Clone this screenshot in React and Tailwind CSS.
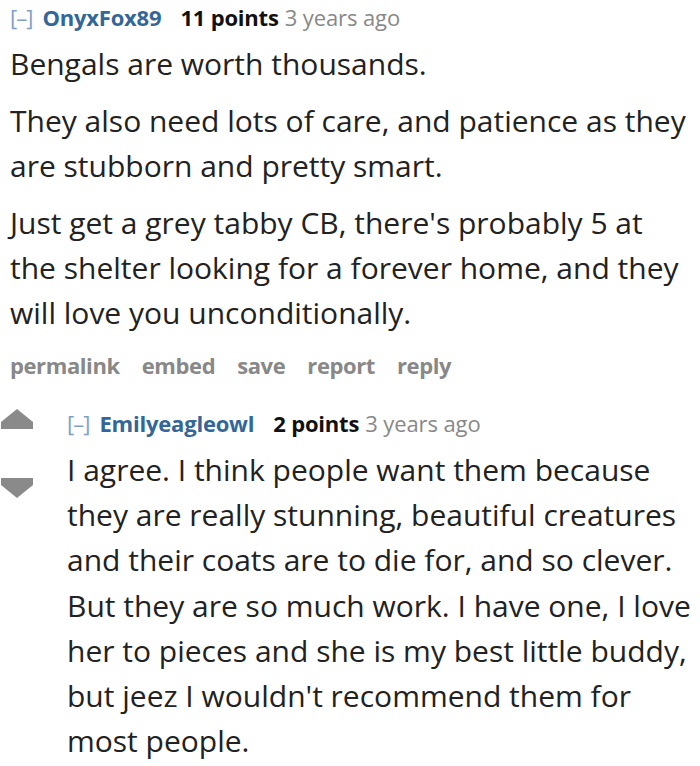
import React from "react";

const font = { fontFamily: '"Open Sans", "Noto Sans", sans-serif' };

function Tagline({ author, points }) {
  return (
    <div className="flex items-baseline whitespace-nowrap text-[22px] leading-[30px]">
      <span className="text-[#7f9fc4] font-normal tracking-[-1px]">[–]</span>
      <span className="ml-[10px] font-bold text-[#336699] tracking-[-0.2px]">{author}</span>
      <span className="ml-[19px] font-bold text-[#111] tracking-[-0.2px]">{points}</span>
      <span className="ml-[6px] text-[#888] tracking-[-0.1px]">3 years ago</span>
    </div>
  );
}

function Body({ paragraphs, className }) {
  return (
    <div className={"text-[30px] text-[#222] whitespace-nowrap " + className}>
      {paragraphs.map((lines, i) => (
        <p key={i} className="mt-[12px] first:mt-0">
          {lines.map((l, j) => (
            <span key={j} className="block">{l}</span>
          ))}
        </p>
      ))}
    </div>
  );
}

export default function App() {
  return (
    <div className="w-[700px] h-[766px] bg-white overflow-hidden" style={font}>
      <div className="pl-[10px] pt-[2px]">
        <Tagline author="OnyxFox89" points="11 points" />
        <Body
          className="mt-[9px] leading-[45px]"
          paragraphs={[
            ["Bengals are worth thousands."],
            ["They also need lots of care, and patience as they", "are stubborn and pretty smart."],
            [
              "Just get a grey tabby CB, there's probably 5 at",
              "the shelter looking for a forever home, and they",
              "will love you unconditionally.",
            ],
          ]}
        />
        <div className="mt-[15px] flex gap-[22px] text-[22px] leading-[30px] font-bold text-[#888] tracking-[-0.4px]">
          <span>permalink</span>
          <span>embed</span>
          <span>save</span>
          <span>report</span>
          <span>reply</span>
        </div>
      </div>

      <div className="mt-[28px] flex">
        <div className="w-[67px] shrink-0 flex flex-col pt-[1px] gap-[49px]">
          <svg width="34" height="20" viewBox="0 0 34 20">
            <polygon points="17,0 33,13 33,20 1,20 1,13" fill="#8a8a8a" />
          </svg>
          <svg width="34" height="20" viewBox="0 0 34 20">
            <polygon points="1,0 33,0 33,7 17,20 1,7" fill="#8a8a8a" />
          </svg>
        </div>
        <div className="flex-1">
          <Tagline author="Emilyeagleowl" points="2 points" />
          <Body
            className="mt-[9px] leading-[45.2px]"
            paragraphs={[
              [
                "I agree. I think people want them because",
                "they are really stunning, beautiful creatures",
                "and their coats are to die for, and so clever.",
                "But they are so much work. I have one, I love",
                "her to pieces and she is my best little buddy,",
                "but jeez I wouldn't recommend them for",
                "most people.",
              ],
            ]}
          />
        </div>
      </div>
    </div>
  );
}
